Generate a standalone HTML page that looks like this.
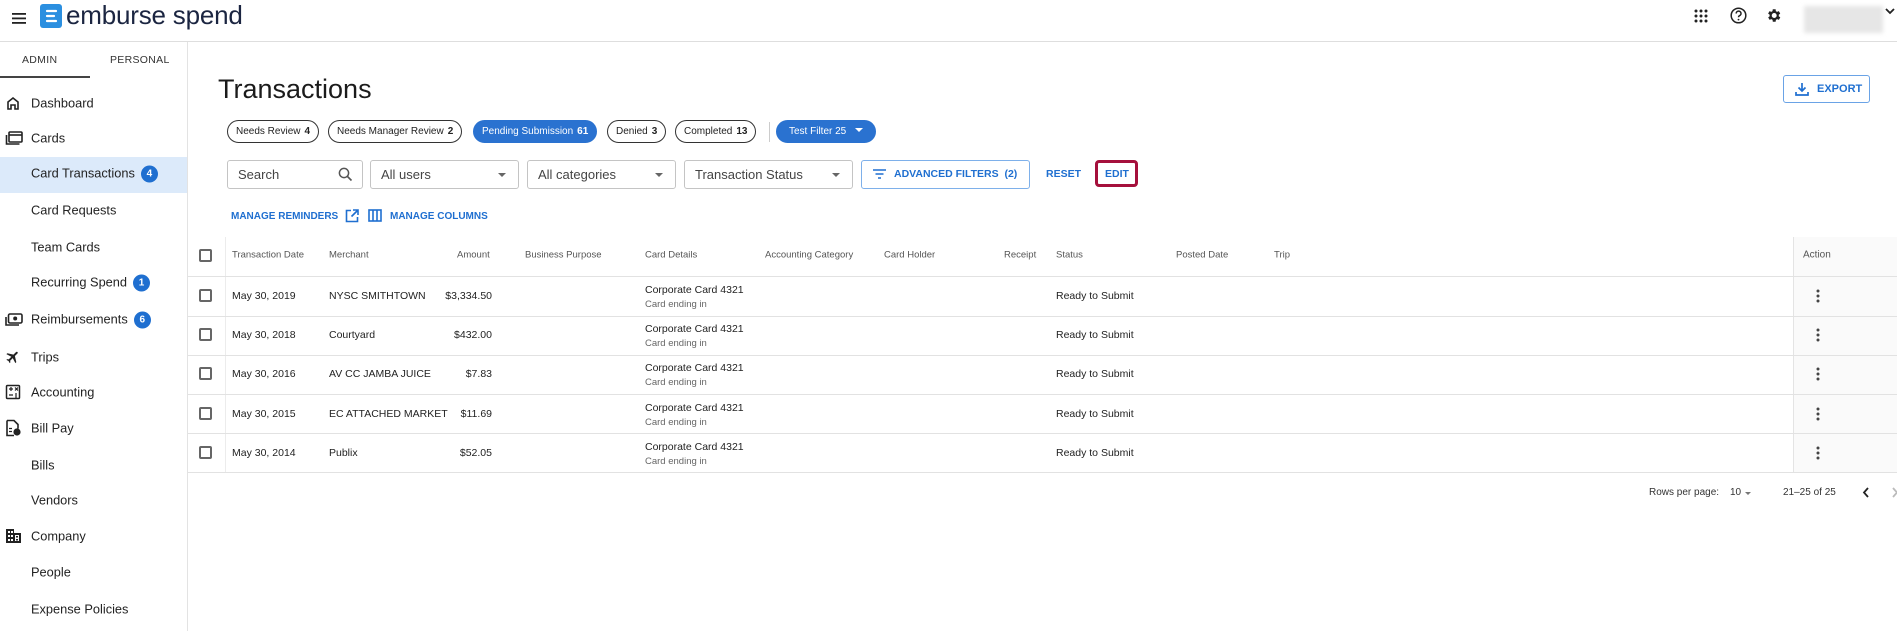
<!DOCTYPE html>
<html><head><meta charset="utf-8"><style>
*{box-sizing:border-box;margin:0;padding:0}
body{width:1897px;height:631px;overflow:hidden;background:#fff;font-family:"Liberation Sans",Arial,sans-serif;color:#222;position:relative}
.a{position:absolute;white-space:nowrap}
.hdr{position:absolute;left:0;top:0;width:1897px;height:42px;border-bottom:1px solid #dedede}
.side{position:absolute;left:0;top:42px;width:188px;height:589px;border-right:1px solid #e3e3e3}
.nav{position:absolute;left:31px;font-size:12.8px;color:#222;transform:translateY(-50%)}
.ico{position:absolute;left:5px;transform:translateY(-50%)}
.badge{display:inline-block;width:17px;height:17px;border-radius:50%;background:#1f6fd0;color:#fff;font-size:10px;font-weight:bold;text-align:center;line-height:17px;margin-left:6px;vertical-align:1px}
.chip{position:absolute;top:120px;height:23px;border:1px solid #333;border-radius:12px;font-size:10px;line-height:21px;padding:0 8px;color:#222}
.chip b{margin-left:4px}
.chip.on{background:#2a72d0;border-color:#2a72d0;color:#fff}
.inp{position:absolute;top:160px;height:29px;border:1px solid #c4c4c4;border-radius:3px;font-size:13px;color:#444;line-height:27px;padding-left:10px}
.caret{position:absolute;right:12px;top:12px;border-left:4px solid transparent;border-right:4px solid transparent;border-top:4px solid #666}
.lnk{color:#1f6fd0;font-weight:bold;font-size:10.5px}
.th{position:absolute;top:255px;font-size:9.5px;color:#555;transform:translateY(-50%)}
.line{position:absolute;left:188px;width:1709px;height:1px;background:#e2e2e2}
.cb{position:absolute;left:199px;width:13px;height:13px;border:2px solid #666;border-radius:2px}
.td{position:absolute;font-size:10.5px;color:#222;transform:translateY(-50%)}
.sub{font-size:9.5px;color:#666;margin-top:3px}
</style></head><body>
<div class="hdr">
 <svg class="a" style="left:12px;top:13px" width="14" height="11"><rect y="0" width="14" height="1.8" fill="#222"/><rect y="4.5" width="14" height="1.8" fill="#222"/><rect y="9" width="14" height="1.8" fill="#222"/></svg>
 <svg class="a" style="left:40px;top:4px" width="22" height="24"><rect width="22" height="24" rx="3" fill="#2b8fe0"/><path d="M7 7h9M7 12h7M7 17h9" stroke="#fff" stroke-width="2.2" stroke-linecap="round"/></svg>
 <div class="a" style="left:66px;top:0px;font-size:26px;color:#1b2541;letter-spacing:-0.2px">emburse spend</div>
 <svg class="a" style="left:1694px;top:9px" width="14" height="14"><g fill="#222"><circle cx="2" cy="2" r="1.5"/><circle cx="7" cy="2" r="1.5"/><circle cx="12" cy="2" r="1.5"/><circle cx="2" cy="7" r="1.5"/><circle cx="7" cy="7" r="1.5"/><circle cx="12" cy="7" r="1.5"/><circle cx="2" cy="12" r="1.5"/><circle cx="7" cy="12" r="1.5"/><circle cx="12" cy="12" r="1.5"/></g></svg>
 <svg class="a" style="left:1730px;top:7px" width="17" height="17"><circle cx="8.5" cy="8.5" r="7.3" fill="none" stroke="#222" stroke-width="1.5"/><path d="M6.2 6.5a2.4 2.4 0 1 1 3.3 2.2c-.8.4-1 .8-1 1.6" fill="none" stroke="#222" stroke-width="1.5"/><circle cx="8.5" cy="12.6" r=".9" fill="#222"/></svg>
 <svg class="a" style="left:1765px;top:7px" width="17" height="17" viewBox="0 0 24 24"><path fill="#222" d="M19.4 13a7.5 7.5 0 0 0 0-2l2.1-1.6-2-3.5-2.5 1a7.6 7.6 0 0 0-1.7-1L15 3.2h-4l-.4 2.7a7.6 7.6 0 0 0-1.7 1l-2.5-1-2 3.5L6.6 11a7.5 7.5 0 0 0 0 2l-2.1 1.6 2 3.5 2.5-1a7.6 7.6 0 0 0 1.7 1l.3 2.7h4l.4-2.7a7.6 7.6 0 0 0 1.7-1l2.5 1 2-3.5zM13 15.5a3.5 3.5 0 1 1 0-7 3.5 3.5 0 0 1 0 7z"/></svg>
 <div class="a" style="left:1804px;top:6px;width:79px;height:27px;background:#e6e6e6;filter:blur(2px)"></div>
 <svg class="a" style="left:1885px;top:8px" width="10" height="7"><path d="M1 1l4 4 4-4" fill="none" stroke="#222" stroke-width="1.8"/></svg>
</div>
<div class="side">
 <div class="a" style="left:22px;top:12px;font-size:10.5px;color:#333;letter-spacing:.3px">ADMIN</div>
 <div class="a" style="left:110px;top:12px;font-size:10.5px;color:#333;letter-spacing:.3px">PERSONAL</div>
 <div class="a" style="left:0;top:34px;width:90px;height:2px;background:#444"></div>
 <div class="a" style="left:0;top:115px;width:187px;height:36px;background:#dceafa"></div>
</div>
<svg class="ico" style="top:103px" width="16" height="16"><path d="M3 14V7l5-4 5 4v7h-3v-4H6v4z" fill="none" stroke="#222" stroke-width="1.6"/></svg>
<div class="nav" style="top:103px">Dashboard</div>
<svg class="ico" style="top:138px" width="18" height="16"><rect x="4" y="2" width="13" height="10" rx="1" fill="none" stroke="#222" stroke-width="1.6"/><path d="M4 5h13" stroke="#222" stroke-width="1.6"/><path d="M1.5 5v9h13" fill="none" stroke="#222" stroke-width="1.6"/></svg>
<div class="nav" style="top:138px">Cards</div>
<div class="nav" style="top:174px">Card Transactions<span class="badge">4</span></div>
<div class="nav" style="top:210px">Card Requests</div>
<div class="nav" style="top:247px">Team Cards</div>
<div class="nav" style="top:283px">Recurring Spend<span class="badge">1</span></div>
<svg class="ico" style="top:320px" width="18" height="14"><rect x="3.5" y="1" width="13.5" height="9" rx="1.5" fill="none" stroke="#222" stroke-width="1.6"/><circle cx="10.2" cy="5.5" r="2" fill="#222"/><path d="M1 4v8h13" fill="none" stroke="#222" stroke-width="1.6"/></svg>
<div class="nav" style="top:320px">Reimbursements<span class="badge">6</span></div>
<svg class="ico" style="top:357px" width="16" height="16" viewBox="0 0 24 24"><path fill="#222" d="M21 16v-2l-8-5V3.5a1.5 1.5 0 0 0-3 0V9l-8 5v2l8-2.5V19l-2 1.5V22l3.5-1 3.5 1v-1.5L13 19v-5.5z" transform="rotate(45 12 12)"/></svg>
<div class="nav" style="top:357px">Trips</div>
<svg class="ico" style="top:392px" width="16" height="16"><rect x="1.5" y="1.5" width="13" height="13" rx="1" fill="none" stroke="#222" stroke-width="1.5"/><path d="M4 5h4M6 3v4M10 3.5l3 3M13 3.5l-3 3M4 11h4M11 9v5" stroke="#222" stroke-width="1.2"/></svg>
<div class="nav" style="top:392px">Accounting</div>
<svg class="ico" style="top:428px" width="16" height="17"><path d="M2 1h7l4 4v4M2 1v15h7" fill="none" stroke="#222" stroke-width="1.6"/><circle cx="12" cy="12.5" r="3.6" fill="#222"/><path d="M4 9h3M4 12h3" stroke="#222" stroke-width="1.3"/></svg>
<div class="nav" style="top:428px">Bill Pay</div>
<div class="nav" style="top:465px">Bills</div>
<div class="nav" style="top:500px">Vendors</div>
<svg class="ico" style="top:536px" width="17" height="16"><path d="M1 15V1h8v4h7v10z" fill="#222"/><g fill="#fff"><rect x="3" y="3" width="2" height="2"/><rect x="6" y="3" width="2" height="2"/><rect x="3" y="7" width="2" height="2"/><rect x="6" y="7" width="2" height="2"/><rect x="3" y="11" width="2" height="2"/><rect x="6" y="11" width="2" height="2"/><rect x="10" y="7" width="4" height="6"/></g><g fill="#222"><rect x="11" y="8" width="2" height="1.5"/><rect x="11" y="11" width="2" height="1.5"/></g></svg>
<div class="nav" style="top:536px">Company</div>
<div class="nav" style="top:572px">People</div>
<div class="nav" style="top:609px">Expense Policies</div>

<div class="a" style="left:218px;top:74px;font-size:27px;color:#1b1b1b">Transactions</div>
<div class="a" style="left:1783px;top:75px;width:87px;height:28px;border:1px solid #6aa3e6;border-radius:3px"></div>
<svg class="a" style="left:1795px;top:82px" width="14" height="14"><path d="M7 1v8M3.5 5.5 7 9l3.5-3.5M1 10v3h12v-3" fill="none" stroke="#1f6fd0" stroke-width="1.7"/></svg>
<div class="a lnk" style="left:1817px;top:83px;font-size:11px">EXPORT</div>

<div class="chip" style="left:227px">Needs Review<b>4</b></div>
<div class="chip" style="left:328px">Needs Manager Review<b>2</b></div>
<div class="chip on" style="left:473px">Pending Submission<b>61</b></div>
<div class="chip" style="left:607px">Denied<b>3</b></div>
<div class="chip" style="left:675px">Completed<b>13</b></div>
<div class="a" style="left:769px;top:122px;width:1px;height:20px;background:#ccc"></div>
<div class="chip on" style="left:776px;padding:0 12px">Test Filter 25<span style="display:inline-block;margin-left:9px;border-left:4px solid transparent;border-right:4px solid transparent;border-top:4px solid #fff;vertical-align:2px"></span></div>

<div class="inp" style="left:227px;width:136px">Search<svg style="position:absolute;right:9px;top:6px" width="15" height="15"><circle cx="6" cy="6" r="4.6" fill="none" stroke="#555" stroke-width="1.5"/><path d="M9.5 9.5l4 4" stroke="#555" stroke-width="1.6"/></svg></div>
<div class="inp" style="left:370px;width:149px">All users<span class="caret"></span></div>
<div class="inp" style="left:527px;width:149px">All categories<span class="caret"></span></div>
<div class="inp" style="left:684px;width:169px">Transaction Status<span class="caret"></span></div>
<div class="a" style="left:861px;top:160px;width:169px;height:29px;border:1px solid #7eb0ea;border-radius:3px"></div>
<svg class="a" style="left:873px;top:169px" width="13" height="10"><path d="M0 1h13M2.5 5h8M5 9h3" stroke="#1f6fd0" stroke-width="1.6"/></svg>
<div class="a lnk" style="left:894px;top:168px">ADVANCED FILTERS&nbsp;&nbsp;(2)</div>
<div class="a lnk" style="left:1046px;top:168px">RESET</div>
<div class="a" style="left:1095px;top:160px;width:43px;height:27px;border:3.5px solid #a5103c;border-radius:4px"></div>
<div class="a lnk" style="left:1105px;top:168px">EDIT</div>

<div class="a lnk" style="left:231px;top:211px;font-size:10px">MANAGE REMINDERS</div>
<svg class="a" style="left:345px;top:209px" width="14" height="14"><path d="M6 1.5H1.5v11h11V8M8 1h5v5M13 1 6.5 7.5" fill="none" stroke="#1f6fd0" stroke-width="1.6"/></svg>
<svg class="a" style="left:368px;top:209px" width="14" height="13"><rect x="1" y="1" width="12" height="11" fill="none" stroke="#1f6fd0" stroke-width="1.6"/><path d="M5 1v11M9 1v11" stroke="#1f6fd0" stroke-width="1.6"/></svg>
<div class="a lnk" style="left:390px;top:211px;font-size:10px">MANAGE COLUMNS</div>

<div class="a" style="left:1793px;top:237px;width:104px;height:236px;background:#fafafa;border-left:1px solid #e4e4e4"></div>
<div class="a" style="left:225px;top:237px;width:1px;height:236px;background:#ececec"></div>
<div class="line" style="top:276px"></div>
<div class="line" style="top:316px"></div>
<div class="line" style="top:355px"></div>
<div class="line" style="top:394px"></div>
<div class="line" style="top:433px"></div>
<div class="line" style="top:472px"></div>
<div class="cb" style="top:249px"></div>
<div class="th" style="left:232px">Transaction Date</div>
<div class="th" style="left:329px">Merchant</div>
<div class="th" style="left:457px">Amount</div>
<div class="th" style="left:525px">Business Purpose</div>
<div class="th" style="left:645px">Card Details</div>
<div class="th" style="left:765px">Accounting Category</div>
<div class="th" style="left:884px">Card Holder</div>
<div class="th" style="left:1004px">Receipt</div>
<div class="th" style="left:1056px">Status</div>
<div class="th" style="left:1176px">Posted Date</div>
<div class="th" style="left:1274px">Trip</div>
<div class="th" style="left:1803px;font-size:10px">Action</div>

<div id="rows"></div>
<script>
var d=[["May 30, 2019","NYSC SMITHTOWN","$3,334.50"],["May 30, 2018","Courtyard","$432.00"],["May 30, 2016","AV CC JAMBA JUICE","$7.83"],["May 30, 2015","EC ATTACHED MARKET","$11.69"],["May 30, 2014","Publix","$52.05"]];
var h="";for(var i=0;i<5;i++){var c=296+i*39.2;
h+='<div class="cb" style="top:'+(c-7)+'px"></div>'+
'<div class="td" style="left:232px;top:'+c+'px">'+d[i][0]+'</div>'+
'<div class="td" style="left:329px;top:'+c+'px">'+d[i][1]+'</div>'+
'<div class="td" style="right:1405px;top:'+c+'px">'+d[i][2]+'</div>'+
'<div class="td" style="left:645px;top:'+(c+1)+'px">Corporate Card 4321<div class="sub">Card ending in</div></div>'+
'<div class="td" style="left:1056px;top:'+c+'px">Ready to Submit</div>'+
'<svg class="a" style="left:1816px;top:'+(c-7)+'px" width="4" height="14"><circle cx="2" cy="2" r="1.5" fill="#444"/><circle cx="2" cy="7" r="1.5" fill="#444"/><circle cx="2" cy="12" r="1.5" fill="#444"/></svg>';}
document.getElementById("rows").innerHTML=h;
</script>
<div class="a" style="left:1649px;top:487px;font-size:10px;color:#333">Rows per page:</div>
<div class="a" style="left:1730px;top:487px;font-size:10px;color:#333">10</div>
<div class="a" style="left:1745px;top:492px;border-left:3.5px solid transparent;border-right:3.5px solid transparent;border-top:3.5px solid #777"></div>
<div class="a" style="left:1783px;top:487px;font-size:10px;color:#333">21–25 of 25</div>
<svg class="a" style="left:1862px;top:487px" width="8" height="11"><path d="M6 1 2 5.5 6 10" fill="none" stroke="#222" stroke-width="1.8"/></svg>
<svg class="a" style="left:1891px;top:487px" width="8" height="11"><path d="M2 1l4 4.5L2 10" fill="none" stroke="#bbb" stroke-width="1.8"/></svg>
</body></html>
